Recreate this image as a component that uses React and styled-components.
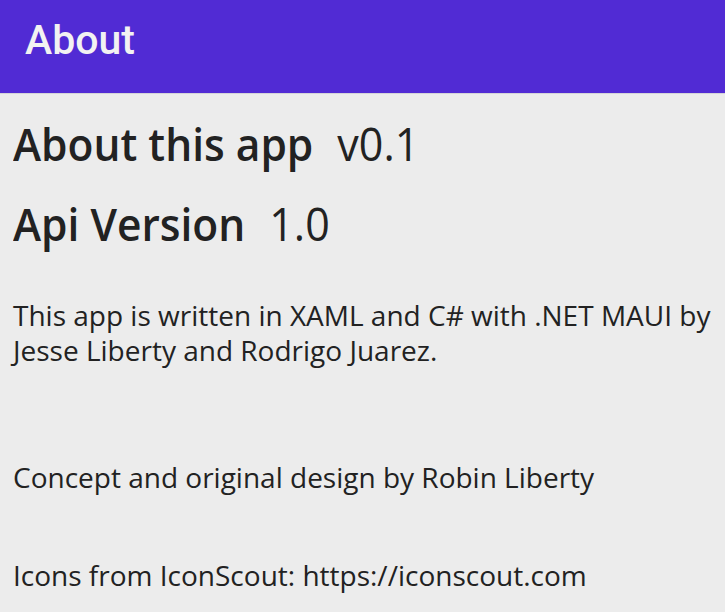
import React from "react";
import styled, { createGlobalStyle } from "styled-components";

const GlobalStyle = createGlobalStyle`
  html, body {
    margin: 0;
    padding: 0;
    background: #ececec;
  }
  body {
    font-family: "Open Sans", "Liberation Sans", sans-serif;
    color: #222;
  }
`;

const Page = styled.div`
  width: 725px;
  height: 612px;
  overflow: hidden;
  background: #ececec;
`;

const TitleBar = styled.header`
  box-sizing: border-box;
  height: 94px;
  background: #512bd4;
  padding: 16px 0 0 25px;
  border-bottom: 1px solid #d4d4d8;
`;

const Title = styled.h1`
  margin: 0;
  font-family: Roboto, "Liberation Sans", sans-serif;
  font-weight: 500;
  font-size: 41px;
  line-height: 48px;
  color: #f2f2f2;
`;

const Content = styled.main`
  padding: 27px 13px 0;
  display: flex;
  flex-direction: column;
  align-items: flex-start;
`;

// headings in the reference are slightly taller than they are wide
const HeadingRow = styled.div`
  display: flex;
  align-items: baseline;
  gap: 24px;
  height: 48px;
  line-height: 48px;
  margin-bottom: ${(p) => p.$after || 0}px;
  transform: scaleY(1.08);
  transform-origin: 0 41px;
`;

const HeadingLabel = styled.span`
  font-size: 42.5px;
  font-weight: 600;
  color: #222;
`;

const HeadingValue = styled.span`
  font-size: 43px;
  font-weight: 400;
  color: #222;
`;

const Text = styled.p`
  margin: 0 0 ${(p) => p.$after || 0}px;
  font-size: 28px;
  line-height: 35px;
  color: #222;
`;

export default function App() {
  return (
    <Page>
      <GlobalStyle />
      <TitleBar>
        <Title>About</Title>
      </TitleBar>
      <Content>
        <HeadingRow $after={32}>
          <HeadingLabel>About this app</HeadingLabel>
          <HeadingValue>v0.1</HeadingValue>
        </HeadingRow>
        <HeadingRow $after={49}>
          <HeadingLabel>Api Version</HeadingLabel>
          <HeadingValue>1.0</HeadingValue>
        </HeadingRow>
        <Text $after={92}>
          This app is written in XAML and C# with .NET MAUI by Jesse Liberty
          and Rodrigo Juarez.
        </Text>
        <Text $after={63}>Concept and original design by Robin Liberty</Text>
        <Text>Icons from IconScout: https://iconscout.com</Text>
      </Content>
    </Page>
  );
}
